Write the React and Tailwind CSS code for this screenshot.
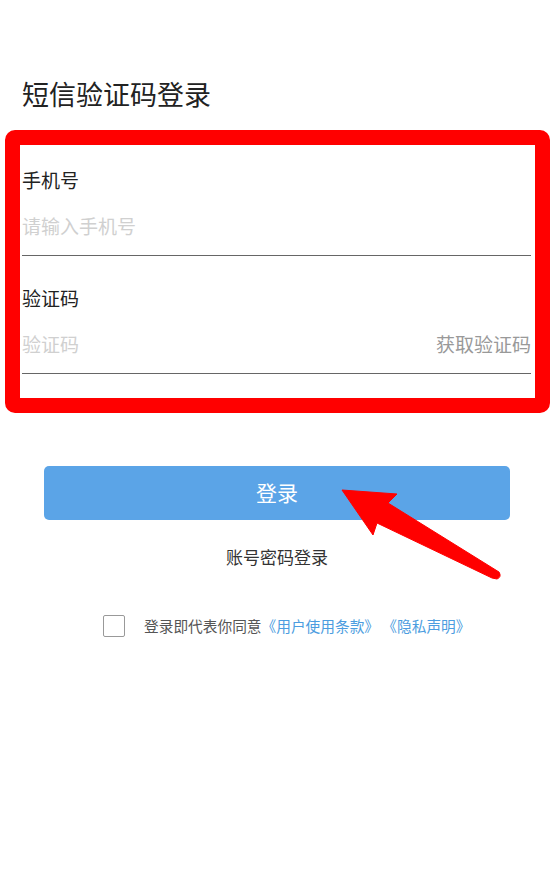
import React from "react";

const font = { fontFamily: '"Noto Sans CJK SC", "Noto Sans", sans-serif' };

// ---------- Form field ----------
function Field({ label, placeholder, action }) {
  return (
    <div>
      <div className="text-[19px] leading-[28px] text-[#222]">{label}</div>
      <div className="mt-[18px] flex items-center justify-between border-b border-[#666] pb-[15px]">
        <input
          className="w-full bg-transparent text-[19px] leading-[28px] text-[#222] outline-none placeholder:text-[#d0d0d0]"
          placeholder={placeholder}
        />
        {action && (
          <button className="shrink-0 text-[19px] leading-[28px] text-[#999]">
            {action}
          </button>
        )}
      </div>
    </div>
  );
}

export default function App() {
  return (
    <div
      className="relative min-h-[885px] w-full overflow-hidden bg-white"
      style={font}
    >
      <div className="px-[22px] pt-[78px] pr-[23px]">
        <h1 className="text-[27px] leading-[32px] font-normal text-[#222]">
          短信验证码登录
        </h1>

        <div className="mt-[56px] flex flex-col gap-[28px]">
          <Field label="手机号" placeholder="请输入手机号" />
          <Field label="验证码" placeholder="验证码" action="获取验证码" />
        </div>
      </div>

      <div className="px-[44px]">
        <button className="mt-[92px] flex h-[54px] w-full items-center justify-center rounded-[5px] bg-[#5ba4e7] text-[21px] text-white">
          登录
        </button>
      </div>

      <div className="mt-[25px] text-center text-[17px] leading-[24px] text-[#333]">
        账号密码登录
      </div>

      <div className="mt-[46px] flex items-center pl-[103px]">
        <span className="h-[22px] w-[22px] rounded-[2px] border-[1.5px] border-[#999]" />
        <span className="ml-[19px] text-[14.7px] leading-[22px] text-[#555]">
          登录即代表你同意
          <a href="#" className="text-[#4c9de0]">《用户使用条款》</a>{" "}
          <a href="#" className="text-[#4c9de0]">《隐私声明》</a>
        </span>
      </div>

      {/* annotation overlay: red frame */}
      <div className="pointer-events-none absolute left-[5px] top-[130px] h-[283px] w-[545px] rounded-[10px] border-[15px] border-[#ff0000]" />

      {/* annotation overlay: arrow */}
      <svg
        className="pointer-events-none absolute left-0 top-0"
        width="554"
        height="885"
        viewBox="0 0 554 885"
      >
        <path
          d="M342 490 L397 494 L388 503 L499 572 Q502 577 497 579 L492 578 L377 523 L373 535 Z"
          fill="#ff0000"
          stroke="#ff0000"
          strokeWidth="1"
          strokeLinejoin="round"
        />
      </svg>
    </div>
  );
}
